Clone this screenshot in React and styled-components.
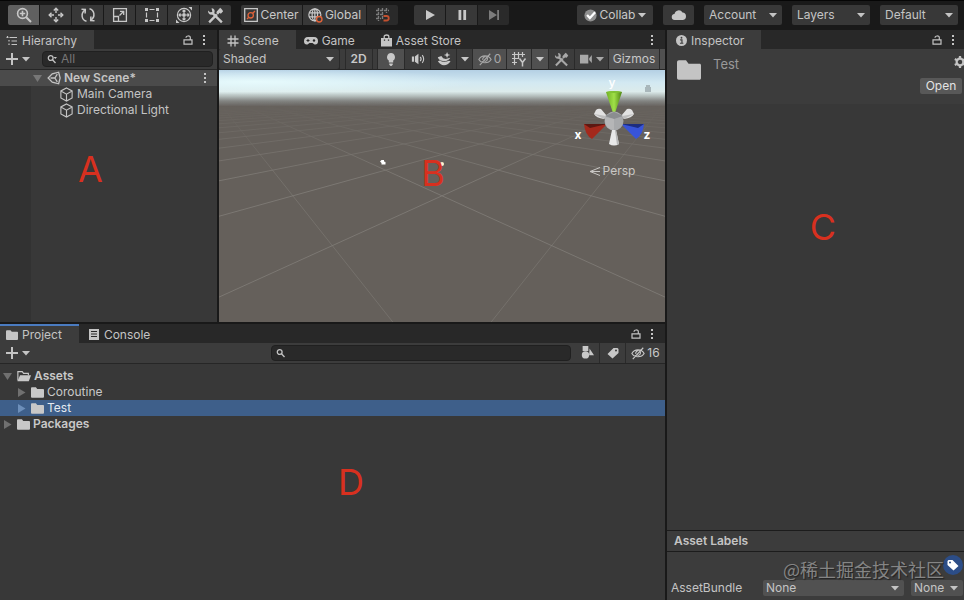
import { useState } from 'react';
import styled, { createGlobalStyle, css } from 'styled-components';

const GlobalStyle = createGlobalStyle`
  * {
    box-sizing: border-box;
  }

  body {
    margin: 0;
    background: #191919;
    color: #c4c4c4;
    font: 400 12px/16px Inter, "Liberation Sans", sans-serif;
    overflow-x: hidden;
  }

  button, input, select {
    margin: 0;
    padding: 0;
    border: 0;
    border-radius: 0;
    color: inherit;
    font: inherit;
    background: none;
  }

  svg {
    display: block;
    flex: none;
  }
`;

const flexCenterStyle = css`
  display: flex;
  align-items: center;
  justify-content: center;
`;

const Editor = styled.div`
  display: flex;
  flex-direction: column;
  min-height: 100vh;
  border-top: 1px solid #050505;
`;

const Toolbar = styled.header`
  display: flex;
  align-items: flex-start;
  gap: 16px;
  height: 29px;
  padding: 4px 6px 0 8px;
`;

const ToolbarSection = styled.div`
  display: flex;
  gap: 10px;
  margin-left: ${({ $end }) => ($end ? 'auto' : 0)};
`;

const ButtonGroup = styled.div`
  display: flex;
  gap: 1px;
  overflow: hidden;
  border-radius: 2px;
`;

const ToolButton = styled.button`
  ${flexCenterStyle}
  gap: ${({ $gap }) => $gap || 2}px;
  width: ${({ $width }) => $width || 31}px;
  height: 20px;
  border-radius: ${({ $round }) => ($round ? 2 : 0)}px;
  background: ${({ $active, $dim }) =>
    $active ? '#606060' : $dim ? '#2a2a2a' : '#383838'};
  color: ${({ $dim }) => ($dim ? '#7c7c7c' : '#c8c8c8')};
`;

const SelectWrap = styled.span`
  display: grid;
  align-items: center;
  height: ${({ $height }) => $height || 20}px;
  width: ${({ $width }) => $width}px;
  flex: none;
  border-radius: 2px;
  background: ${({ $bg }) => $bg || '#383838'};

  select {
    grid-area: 1 / 1;
    appearance: none;
    width: 100%;
    height: 100%;
    padding: 0 14px 0 ${({ $pad }) => $pad || 5}px;
    outline: none;
  }

  svg {
    grid-area: 1 / 1;
    justify-self: end;
    margin-right: 5px;
    pointer-events: none;
  }
`;

const Workspace = styled.div`
  display: flex;
  flex: 1;
  gap: 2px;
`;

const MainColumn = styled.div`
  display: flex;
  flex: 665 1 0;
  flex-direction: column;
  gap: 2px;
  min-width: 0;
`;

const UpperRow = styled.div`
  display: flex;
  flex: 292 1 0;
  gap: 2px;
`;

const Panel = styled.section`
  position: relative;
  display: flex;
  flex: ${({ $grow }) => $grow} 1 0;
  flex-direction: column;
  min-width: 0;
  overflow: hidden;
  background: #383838;
`;

const TabBar = styled.div`
  display: flex;
  align-items: center;
  height: 19px;
  background: #282828;
`;

const Tab = styled.button`
  display: flex;
  align-items: center;
  gap: 4px;
  height: 19px;
  padding: ${({ $focused }) => ($focused ? 0 : 2)}px 17px 0
    ${({ $left }) => $left || 6}px;
  border-top: ${({ $focused }) => ($focused ? '2px solid #4a7bc0' : '0')};
  background: ${({ $active }) => ($active ? '#3c3c3c' : 'transparent')};
  white-space: nowrap;
`;

const TabTools = styled.div`
  display: flex;
  gap: 2px;
  margin-left: auto;
  padding-right: ${({ $right }) => $right || 6}px;
`;

const IconButton = styled.button`
  ${flexCenterStyle}
  flex: none;
  width: 14px;
  height: 16px;
`;

const PanelBar = styled.div`
  display: flex;
  align-items: center;
  height: 21px;
  border-bottom: 1px solid #262626;
  background: #3c3c3c;
`;

const AddButton = styled.button`
  display: flex;
  align-items: center;
  gap: 3px;
  height: 20px;
  padding-left: 5px;
`;

const Search = styled.label`
  display: flex;
  align-items: center;
  gap: 4px;
  flex: ${({ $width }) => ($width ? `0 1 ${$width}` : '1 1 0')};
  min-width: 0;
  height: 16px;
  margin: 0 4px 0 ${({ $left }) => $left || 'auto'};
  padding: 0 4px;
  border: 1px solid #202020;
  border-radius: 4px;
  background: #292929;

  input {
    flex: 1;
    min-width: 0;
    height: 14px;
    outline: none;
  }

  input::placeholder {
    color: #777;
    opacity: 1;
  }
`;

const HierarchyTree = styled.ul`
  flex: 1;
  margin: 0;
  padding: 0;
  list-style: none;
  background: linear-gradient(90deg, #323232 31px, #383838 31px);
`;

const HierarchyRow = styled.li`
  display: flex;
  align-items: center;
  gap: 3px;
  height: 16px;
  padding: 0 5px 0 ${({ $scene }) => ($scene ? 30 : 59)}px;
  background: ${({ $scene }) => ($scene ? '#4b4b4b' : 'transparent')};
  font-weight: ${({ $scene }) => ($scene ? 600 : 400)};

  ${IconButton}:first-child {
    color: #777;
  }

  ${IconButton}:last-child {
    margin-left: auto;
  }
`;

const SceneBar = styled(PanelBar)`
  gap: 1px;
  background: #2a2a2a;
`;

const SceneSpacer = styled.span`
  width: 5px;
  height: 20px;
  background: #3c3c3c;
`;

const SceneButton = styled.button`
  ${flexCenterStyle}
  gap: 2px;
  flex: none;
  width: ${({ $width }) => $width}px;
  height: 20px;
  background: ${({ $active }) => ($active ? '#505050' : '#3c3c3c')};
  color: ${({ $dim }) => ($dim ? '#a8a8a8' : '#c8c8c8')};
  font-weight: ${({ $bold }) => ($bold ? 600 : 400)};
`;

const Viewport = styled.div`
  position: relative;
  flex: 1;
  min-height: 0;
  background: #65605b;

  > svg {
    position: absolute;
    inset: 0;
    width: 100%;
    height: 100%;
  }
`;

const Gizmo = styled.div`
  position: absolute;
  top: 7px;
  right: 1px;
  display: flex;
  flex-direction: column;
  align-items: center;
  gap: 10px;
  width: 100px;
  color: #c9c7c4;

  svg {
    overflow: visible;
  }
`;

const Projection = styled.button`
  display: flex;
  align-items: center;
  gap: 3px;
  margin-right: 4px;
`;

const Marker = styled.span`
  position: absolute;
  left: ${({ $x }) => $x}%;
  top: ${({ $y }) => $y}%;
  transform: translate(-50%, -50%);
  color: #d8301f;
  font-size: 36px;
  line-height: 40px;
  pointer-events: none;
`;

const ProjectTree = styled.ul`
  flex: 1;
  margin: 0;
  padding: 4px 0;
  list-style: none;
`;

const ProjectRow = styled.li`
  display: flex;
  align-items: center;
  gap: 3px;
  height: 16px;
  padding-left: ${({ $depth }) => $depth * 14}px;
  background: ${({ $selected }) => ($selected ? '#3e5f8a' : 'transparent')};
  color: ${({ $selected }) => ($selected ? '#e4e9f0' : '#c8c8c8')};
  font-weight: ${({ $depth }) => ($depth ? 400 : 600)};

  > svg {
    color: #c8c8c8;
  }

  ${IconButton} {
    color: ${({ $selected }) => ($selected ? '#6d8fba' : '#707070')};
  }
`;

const AssetHeader = styled.div`
  display: flex;
  justify-content: space-between;
  gap: 12px;
  height: 55px;
  padding: 7px 0 0 10px;
  background: #3c3c3c;

  > svg {
    margin-top: 2px;
  }
`;

const AssetName = styled.h2`
  flex: 1;
  margin: 0;
  color: #999;
  font-size: 13px;
  font-weight: 400;
`;

const AssetActions = styled.div`
  display: flex;
  flex-direction: column;
  align-items: flex-end;
  gap: 10px;

  svg {
    margin: 0 -2px 0 0;
  }
`;

const OpenButton = styled.button`
  width: 42px;
  height: 16px;
  margin-right: 2px;
  border-radius: 2px;
  background: #585858;
  color: #e4e4e4;
`;

const InspectorBody = styled.div`
  flex: 1;
`;

const LabelsHeader = styled.h3`
  display: flex;
  align-items: center;
  height: 22px;
  margin: 0;
  padding-left: 7px;
  border: solid #1c1c1c;
  border-width: 1px 0;
  background: #3c3c3c;
  font-size: 12px;
  font-weight: 600;
`;

const LabelsBody = styled.div`
  position: relative;
  display: flex;
  flex-direction: column;
  justify-content: space-between;
  height: 48px;
  padding: 3px 1px 4px 4px;
  background: #3c3c3c;
`;

const LabelButton = styled.button`
  ${flexCenterStyle}
  align-self: flex-end;
  width: 20px;
  height: 20px;
  border-radius: 10px;
  background: #2c4d87;
  color: #fff;
`;

const BundleRow = styled.div`
  display: flex;
  align-items: center;
  gap: 7px;

  label {
    flex: 85 1 0;
  }
`;

const Watermark = styled.span`
  position: absolute;
  top: 5px;
  right: 20px;
  color: #858585;
  font: 400 18px/24px "Noto Sans CJK SC", sans-serif;
  text-shadow: 1px 1px 1px #222;
  white-space: nowrap;
  pointer-events: none;
`;

function Icon({ size = 16, children, box = 16, width, stroke = 1.3, ...rest }) {
  return (
    <svg
      width={width || size}
      height={size}
      viewBox={`0 0 ${width ? (box * width) / size : box} ${box}`}
      fill="none"
      stroke="currentColor"
      strokeWidth={stroke}
      aria-hidden="true"
      {...rest}
    >
      {children}
    </svg>
  );
}

const solid = { fill: 'currentColor', stroke: 'none' };

const ZoomIcon = () => (
  <Icon stroke={1.6}>
    <circle cx="6.500" cy="6.500" r="4.900" />
    <path d="M3.800 6.500h5.400M6.500 3.800v5.400" />
    <path d="M10.200 10.200l4.800 4.800" strokeWidth="2" />
  </Icon>
);

const MoveIcon = () => (
  <Icon stroke={1.4}>
    <path d="M8 1.500V6M8 10v4.500M1.500 8H6M10 8h4.500" />
    <path d="M5.800 3.500L8 1.200l2.200 2.300M5.800 12.500L8 14.800l2.200-2.300M3.500 5.800L1.200 8l2.300 2.200M12.500 5.800L14.800 8l-2.300 2.200" />
  </Icon>
);

const RotateIcon = () => (
  <Icon stroke={1.5}>
    <path d="M6.500 14.300C1.500 13 .5 6.500 4.800 3.200M9.500 1.700c5 1.300 6 7.800 1.700 11.100" />
    <path d="M1.500 2.300l3.800.2-.2 4M14.500 13.700l-3.800-.2.200-4" />
  </Icon>
);

const ScaleIcon = () => (
  <Icon>
    <path d="M1.600 1.600h12.800v12.800H1.600zM7.500 8.500l4-4M8 4.300h3.700V8M1.600 9.500h4.900v4.900" />
  </Icon>
);

const RectIcon = () => (
  <Icon stroke={1.2}>
    <path d="M5.500 2.500h5M5.500 13.500h5M2.500 5.500v5M13.500 5.500v5" />
    <path {...solid} d="M1 1h3v3H1zM12 1h3v3h-3zM1 12h3v3H1zM12 12h3v3h-3z" />
  </Icon>
);

const TransformIcon = () => (
  <Icon size={18} box={18} stroke={1.2}>
    <circle cx="9" cy="9" r="6.600" />
    <path d="M9 4v10M4 9h10M7.500 5.500L9 4l1.500 1.500M7.500 12.500L9 14l1.500-1.500M5.500 7.500L4 9l1.500 1.500M12.500 7.500L14 9l-1.500 1.500" />
    <path {...solid} d="M7.500 7.500h3v3h-3zM13.500 1H17v3.500zM1 13.500V17h3.500z" />
  </Icon>
);

const ToolsIcon = ({ size = 17 }) => (
  <Icon size={size} stroke={2.2}>
    <path d="M5 5.500l9 9M2 14.500L9.300 7" />
    <path
      {...solid}
      d="M4.300 1.100L5 4.600 2.800 5 1 3.200C.6 6 2.800 7.800 5.200 7.100l1.900-1.900C7.700 2.800 6.400 1.100 4.300 1.100zM9.200 4.200l3.200-3.400 1.300 1.100L15.200 4l-2.200 2.300-1.100-.8-1.600 1.700-1.500-1.500z"
    />
  </Icon>
);

const PivotIcon = () => (
  <Icon size={14} box={14}>
    <path d="M.7.700h12.600v12.600H.7z" />
    <g stroke="#e0633a">
      <circle cx="6.700" cy="7.300" r="2.700" />
      <path d="M8.800 5.200L11 3M4.800 9.200L3 11" />
    </g>
  </Icon>
);

const GlobeIcon = () => (
  <Icon size={15}>
    <circle cx="7.300" cy="7.300" r="6.400" />
    <ellipse cx="7.300" cy="7.300" rx="2.900" ry="6.400" />
    <path d="M1 5.300h12.600M1 9.500h9M7.300 1v12.500" />
    <circle cx="12" cy="12" r="2.900" fill="#383838" stroke="#e0633a" strokeWidth="1.500" />
  </Icon>
);

const SnapIcon = () => (
  <Icon stroke={1.4}>
    <path d="M1 3.500h13M1 7.500h8M1 11.500h5M3.500 1v13M7.500 1v12M11.500 1v5" strokeDasharray="3 1" />
    <path d="M8.500 9h3a2 2 0 010 4.500h-3" stroke="#c2502f" strokeWidth="1.800" />
  </Icon>
);

const PlayIcon = () => (
  <Icon>
    <path {...solid} d="M4 3l9 5-9 5z" />
  </Icon>
);

const PauseIcon = () => (
  <Icon>
    <path {...solid} d="M4.500 3h2.800v10H4.500zM9.300 3h2.800v10H9.300z" />
  </Icon>
);

const StepIcon = () => (
  <Icon>
    <path {...solid} d="M3 3l8 5-8 5zM11.200 3H13v10h-1.800z" />
  </Icon>
);

const CheckIcon = () => (
  <Icon size={13}>
    <circle cx="8" cy="8" r="7.500" fill="#8f8f8f" stroke="none" />
    <path d="M3.800 7.500l3.400 3.600 6.500-7" stroke="#fff" strokeWidth="2.800" />
  </Icon>
);

const CloudIcon = () => (
  <Icon>
    <path {...solid} d="M4 13a3 3 0 01-.5-6A4.300 4.300 0 0111.500 5.500 3.800 3.800 0 0112 13z" />
  </Icon>
);

const Caret = () => (
  <Icon size={8} box={8}>
    <path {...solid} d="M0 2h8L4 6.500z" />
  </Icon>
);

const HierarchyIcon = () => (
  <Icon size={12} box={12} stroke={1.2}>
    <path d="M3.500 2.500H11M5.500 6H11M5.500 9.500H11M1.500 1v1.500M3 5v1.500M3 8.500V10M.5 2.500h2" />
  </Icon>
);

const LockIcon = () => (
  <Icon size={10} box={10} stroke={1.2}>
    <path d="M1 4.800h8v4.400H1zM3 2.800C3 .4 7.300.4 7.300 2.600v2.200" />
  </Icon>
);

const DotsIcon = () => (
  <Icon size={12} box={12}>
    <path {...solid} d="M5 1h2v2H5zM5 5h2v2H5zM5 9h2v2H5z" />
  </Icon>
);

const PlusIcon = () => (
  <Icon size={14} box={14} stroke={2}>
    <path d="M7 1v12M1 7h12" />
  </Icon>
);

const SearchIcon = ({ menu }) => (
  <Icon size={10} box={10}>
    <circle cx="3.700" cy="4" r="2.400" />
    <path d="M5.500 5.800L8.500 9" />
    {menu && <path {...solid} d="M6.500 3H10L8.300 5z" />}
  </Icon>
);

const UnityIcon = () => (
  <Icon size={14} stroke={1.5}>
    <path d="M1.300 8L6 3.300l7.300-1.900L15 8l-1.700 6.600L6 12.700z" />
    <path d="M4 8h5M9 8l2.800-4.500M9 8l2.800 4.500" />
  </Icon>
);

const CubeIcon = () => (
  <Icon size={15} stroke={1.2}>
    <path d="M8 1l6 3.200v7.400L8 15l-6-3.400V4.200zM2 4.200l6 3.400 6-3.400M8 7.600V15" />
  </Icon>
);

const Triangle = ({ open }) => (
  <Icon size={9} box={9}>
    <path {...solid} d={open ? 'M0 1h9L4.500 8z' : 'M1 0l7.500 4.500L1 9z'} />
  </Icon>
);

const HashIcon = () => (
  <Icon size={12} box={12}>
    <path d="M4 .5v11M8 .5v11M.5 4h11M.5 8h11" />
  </Icon>
);

const GamepadIcon = () => (
  <Icon size={12} width={14} box={12}>
    <path {...solid} d="M4 2h6c3 0 4 2 4 4.200 0 2.500-1.600 3.800-3.500 3.200L8.500 8h-3l-2 1.400C1.600 10 0 8.700 0 6.200 0 4 1 2 4 2z" />
    <path d="M2.500 5.500h3M4 4v3" stroke="#282828" strokeWidth="1" />
    <circle cx="10" cy="5.500" r="1.200" fill="#282828" stroke="none" />
  </Icon>
);

const StoreIcon = () => (
  <Icon size={13} width={11} box={13}>
    <path {...solid} d="M0 4h11v8.500H0z" />
    <path d="M3.200 5V2.500c0-2 4.600-2 4.600 0V5" />
    <path d="M3.500 5.500v1.300M7.500 5.500v1.300" stroke="#282828" />
  </Icon>
);

const BulbIcon = () => (
  <Icon size={14}>
    <path {...solid} d="M8 1a4.800 4.800 0 00-2.500 8.700V12h5V9.700A4.800 4.800 0 008 1zM6 13h4v1.500L8.500 16h-1L6 14.500z" />
  </Icon>
);

const SoundIcon = () => (
  <Icon size={14}>
    <path {...solid} d="M1 5h2.500v6H1zM4.500 5L8.500 2v12l-4-3z" />
    <path d="M10.500 5.500c1.200 1.400 1.200 3.600 0 5M12.800 3.500c2.200 2.500 2.200 6.500 0 9" />
  </Icon>
);

const LayersIcon = () => (
  <Icon size={14}>
    <path {...solid} d="M1 6l4-1.500 2 2.500 3 1 5-1.500c0 1.500-3.500 4-7 4S1 8 1 6zM1 10.500l2-.7c3 2 7.500 2 10.500.2l2 .5c-2 3-4.500 4.500-7.500 4.500S2.500 13 1 10.500zM11.500 0l1.100 2.500 2.600.8-2.600 1-1.100 2.600-1.100-2.600-2.600-1 2.600-.8z" />
  </Icon>
);

const EyeOffIcon = () => (
  <Icon size={14}>
    <path d="M1 8.500c3-5.500 11-5.500 14 0-3 5-11 5-14 0zM2 15L14 2M10.500 6.500c1 2-.5 4.500-3 4.200M5.500 9c-.4-2 1-3.600 2.800-3.600" />
  </Icon>
);

const GridYIcon = () => (
  <Icon stroke={1.2}>
    <path d="M3.500 1v13M7.500 1v7M11.500 1v5M1 3.500h13M1 7.500h7M1 11.500h5" />
    <path d="M8.500 7.500l3 4 3-4M11.500 11v4.500" strokeWidth="1.500" />
  </Icon>
);

const CameraIcon = () => (
  <Icon size={14}>
    <path {...solid} d="M0 3h9.500v10H0zM10.500 7l3-3.500v9l-3-3.500z" />
  </Icon>
);

const InfoIcon = () => (
  <Icon size={11} box={12}>
    <circle {...solid} cx="6" cy="6" r="6" />
    <path d="M4.500 5.300h2V9M4.300 9h3.700" stroke="#3c3c3c" />
    <circle cx="6" cy="3" r="1" fill="#3c3c3c" stroke="none" />
  </Icon>
);

const FolderIcon = ({ size = 14 }) => (
  <Icon size={size}>
    <path {...solid} d="M0 3C0 2 .5 1.500 1.300 1.500h4.700L7.700 3.800H15c.7 0 1 .4 1 1v8.500c0 .8-.4 1.200-1.200 1.200H1.200C.4 14.500 0 14 0 13.200z" />
  </Icon>
);

const FolderOpenIcon = () => (
  <Icon size={14}>
    <path d="M1 13V3h5l1.500 2H13v2" />
    <path {...solid} d="M3.500 7H16l-2.500 7H.5z" />
  </Icon>
);

const ConsoleIcon = () => (
  <Icon size={11} width={11} box={11}>
    <path {...solid} d="M0 0h10v11H0z" />
    <path d="M2 2.500h6M2 5h6M2 7.500h6" stroke="#282828" strokeWidth="1" />
  </Icon>
);

const ShapesIcon = () => (
  <Icon size={13}>
    <path {...solid} d="M2 0h7v6H2zM10.500 3l5.500 8.500h-6z" />
    <circle {...solid} cx="5.500" cy="11" r="4.500" />
  </Icon>
);

const TagIcon = ({ flip }) => (
  <Icon size={12} box={12} transform={flip ? 'scale(-1 1)' : undefined}>
    <path {...solid} fillRule="evenodd" d="M6.500 1h4l1 1v4l-6 5.500L.5 7zM9 2.500a1 1 0 100 2 1 1 0 000-2z" />
  </Icon>
);

const GearIcon = () => (
  <Icon size={12}>
    <circle cx="8" cy="8" r="4.500" strokeWidth="3" />
    <path d="M8 0v3M8 13v3M1.100 4l2.600 1.500M12.300 10.500l2.600 1.500M1.100 12l2.600-1.500M12.300 5.500L14.900 4" strokeWidth="3" />
  </Icon>
);

// Ground grid: both line families meet on the horizon, just outside the view.
const HORIZON = 20;
const CENTER_X = 223;
const VANISH = 233;
const gridLines = Array.from({ length: 24 }, (_, k) => 1 / (0.0034 + 0.00605 * k));

function SceneView() {
  return (
    <svg viewBox="0 0 446 252" preserveAspectRatio="none" aria-hidden="true">
      <defs>
        <linearGradient id="sky" x1="0" y1="0" x2="0" y2="1">
          <stop offset="0" stopColor="#b4d0e4" />
          <stop offset="0.35" stopColor="#d3e9f2" />
          <stop offset="0.6" stopColor="#dcebeb" />
          <stop offset="0.72" stopColor="#b5bfbd" />
          <stop offset="0.86" stopColor="#838482" />
          <stop offset="1" stopColor="#686460" />
        </linearGradient>
        <radialGradient id="glow" cx="0.08" cy="0.45" r="0.5">
          <stop offset="0" stopColor="#ecffff" stopOpacity="0.8" />
          <stop offset="1" stopColor="#ecffff" stopOpacity="0" />
        </radialGradient>
        <linearGradient id="fade" x1="0" y1="32" x2="0" y2="110" gradientUnits="userSpaceOnUse">
          <stop offset="0" stopColor="#fff" stopOpacity="0" />
          <stop offset="1" stopColor="#fff" stopOpacity="1" />
        </linearGradient>
        <mask id="ground">
          <rect width="446" height="252" fill="url(#fade)" />
        </mask>
      </defs>
      <rect width="446" height="252" fill="#65605b" />
      <rect width="446" height="36" fill="url(#sky)" />
      <rect width="446" height="26" fill="url(#glow)" />
      <g stroke="#817d79" strokeWidth="0.8" mask="url(#ground)">
        {gridLines.map((d, k) => (
          <g key={k} strokeOpacity={k ? 1 : 0.7}>
            <line x1={CENTER_X - VANISH} y1={HORIZON} x2={CENTER_X + 2 * VANISH} y2={HORIZON + 3 * d} />
            <line x1={CENTER_X + VANISH} y1={HORIZON} x2={CENTER_X - 2 * VANISH} y2={HORIZON + 3 * d} />
          </g>
        ))}
      </g>
      <path d="M161 91.500l1.500-1.500h2.500v1.500l1.500.5v2.500h-4V93z" fill="#fff" />
      <circle cx="223" cy="94" r="2" fill="#fff4cf" />
      <path d="M427 17v-2h4v2h1v5h-6v-5z" fill="#a9b7bb" />
    </svg>
  );
}

function AxisGizmo() {
  return (
    <svg width="80" height="76" viewBox="0 0 80 76" aria-hidden="true">
      <defs>
        <linearGradient id="green">
          <stop offset="0" stopColor="#6fae25" />
          <stop offset="0.5" stopColor="#a0e048" />
          <stop offset="1" stopColor="#4d8312" />
        </linearGradient>
      </defs>
      <path d="M20 37l2-4q2-2 5-1l6 7-3 3q-8-1-10-5zM60 37l-2-4q-2-2-5-1l-6 7 3 3q8-1 10-5z" fill="#e2e2e2" />
      <path d="M20 37l10 5 2-3zM60 37l-10 5-2-3z" fill="#bdbdbd" />
      <path d="M32 15q8-2 16 0l-7 21h-2z" fill="url(#green)" />
      <path d="M32 15q8-2 16 0q-8 2-16 0z" fill="#7fc233" />
      <path d="M10 47h23L18 62q-7-4-8-15z" fill="#a4291c" />
      <path d="M10 47h23l-17 4z" fill="#5d1812" />
      <path d="M70 47H47l15 15q7-4 8-15z" fill="#3854d8" />
      <path d="M70 47H47l17 4z" fill="#1d2d80" />
      <circle cx="40" cy="44" r="9.500" fill="#a7a9ab" />
      <path d="M31 39l9-4 9 4-9 3z" fill="#8b8d90" />
      <path d="M31 40l9 2v11q-10-1-9-13z" fill="#b5b6b7" />
      <path d="M38 53h4l3 14q-5 3-10 0z" fill="#e8e8e8" />
      <path d="M41 53h1l3 14-2 1z" fill="#b7b7b7" />
      <g fill="#fff" fontSize="12" fontWeight="700" textAnchor="middle">
        <text x="38" y="10" fontWeight="500">y</text>
        <text x="4" y="62">x</text>
        <text x="73" y="62">z</text>
      </g>
    </svg>
  );
}

function Dropdown({ label, value, ...rest }) {
  return (
    <SelectWrap {...rest}>
      <select aria-label={label} defaultValue={value}>
        <option>{value}</option>
      </select>
      <Caret />
    </SelectWrap>
  );
}

function PanelTools({ lock = true, ...rest }) {
  return (
    <TabTools {...rest}>
      {lock && (
        <IconButton aria-label="Lock">
          <LockIcon />
        </IconButton>
      )}
      <IconButton aria-label="More">
        <DotsIcon />
      </IconButton>
    </TabTools>
  );
}

const transformTools = [
  ['View', ZoomIcon],
  ['Move', MoveIcon],
  ['Rotate', RotateIcon],
  ['Scale', ScaleIcon],
  ['Rect', RectIcon],
  ['Transform', TransformIcon],
  ['Custom tools', ToolsIcon],
];

function MainToolbar() {
  const [tool, setTool] = useState('View');

  return (
    <Toolbar>
      <ToolbarSection>
        <ButtonGroup>
          {transformTools.map(([name, Glyph]) => (
            <ToolButton
              key={name}
              aria-label={name}
              $active={name === tool}
              onClick={() => setTool(name)}
            >
              <Glyph />
            </ToolButton>
          ))}
        </ButtonGroup>
        <ButtonGroup>
          <ToolButton $width={61}>
            <PivotIcon />
            Center
          </ToolButton>
          <ToolButton $width={63}>
            <GlobeIcon />
            Global
          </ToolButton>
          <ToolButton $dim aria-label="Grid snapping">
            <SnapIcon />
          </ToolButton>
        </ButtonGroup>
      </ToolbarSection>
      <ButtonGroup>
        <ToolButton aria-label="Play">
          <PlayIcon />
        </ToolButton>
        <ToolButton aria-label="Pause">
          <PauseIcon />
        </ToolButton>
        <ToolButton $dim aria-label="Step">
          <StepIcon />
        </ToolButton>
      </ButtonGroup>
      <ToolbarSection $end>
        <ToolButton $round $width={76} $gap={3}>
          <CheckIcon />
          Collab
          <Caret />
        </ToolButton>
        <ToolButton $round aria-label="Services">
          <CloudIcon />
        </ToolButton>
        <Dropdown label="Account" value="Account" $width={78} />
        <Dropdown label="Layers" value="Layers" $width={78} />
        <Dropdown label="Layout" value="Default" $width={78} />
      </ToolbarSection>
    </Toolbar>
  );
}

function Hierarchy() {
  return (
    <Panel $grow={217}>
      <TabBar role="tablist">
        <Tab role="tab" aria-selected $active>
          <HierarchyIcon />
          Hierarchy
        </Tab>
        <PanelTools />
      </TabBar>
      <PanelBar>
        <AddButton aria-label="Create">
          <PlusIcon />
          <Caret />
        </AddButton>
        <Search $left="12px">
          <SearchIcon menu />
          <input placeholder="All" aria-label="Search hierarchy" />
        </Search>
      </PanelBar>
      <HierarchyTree>
        <HierarchyRow $scene>
          <IconButton aria-label="Collapse">
            <Triangle open />
          </IconButton>
          <UnityIcon />
          New Scene*
          <IconButton aria-label="Scene menu">
            <DotsIcon />
          </IconButton>
        </HierarchyRow>
        <HierarchyRow>
          <CubeIcon />
          Main Camera
        </HierarchyRow>
        <HierarchyRow>
          <CubeIcon />
          Directional Light
        </HierarchyRow>
      </HierarchyTree>
      <Marker $x={41.7} $y={47.6}>A</Marker>
    </Panel>
  );
}

function Scene() {
  return (
    <Panel $grow={446}>
      <TabBar role="tablist">
        <Tab role="tab" aria-selected $active $left={8}>
          <HashIcon />
          Scene
        </Tab>
        <Tab role="tab" $left={8}>
          <GamepadIcon />
          Game
        </Tab>
        <Tab role="tab" $left={9}>
          <StoreIcon />
          Asset Store
        </Tab>
        <PanelTools lock={false} />
      </TabBar>
      <SceneBar>
        <Dropdown label="Draw mode" value="Shaded" $width={120} $pad={4} $bg="#3c3c3c" />
        <SceneSpacer />
        <SceneButton $width={26} $bold>2D</SceneButton>
        <SceneSpacer />
        <SceneButton $width={26} $active aria-label="Lighting">
          <BulbIcon />
        </SceneButton>
        <SceneButton $width={25} aria-label="Audio">
          <SoundIcon />
        </SceneButton>
        <SceneButton $width={25} aria-label="Effects">
          <LayersIcon />
        </SceneButton>
        <SceneButton $width={15} aria-label="Effects menu">
          <Caret />
        </SceneButton>
        <SceneButton $width={33} $active $dim aria-label="Hidden objects">
          <EyeOffIcon />0
        </SceneButton>
        <SceneButton $width={24} $active aria-label="Grid">
          <GridYIcon />
        </SceneButton>
        <SceneButton $width={16} $active aria-label="Grid menu">
          <Caret />
        </SceneButton>
        <SceneButton $width={25} $dim aria-label="Tools">
          <ToolsIcon size={15} />
        </SceneButton>
        <SceneButton $width={33} $dim aria-label="Camera">
          <CameraIcon />
          <Caret />
        </SceneButton>
        <SceneButton $width={50} $active>Gizmos</SceneButton>
        <SceneButton $width={5} $active aria-label="Gizmos menu" />
      </SceneBar>
      <Viewport>
        <SceneView />
        <Gizmo>
          <AxisGizmo />
          <Projection>
            <Icon size={11} box={11} stroke={1}>
              <path d="M11 1.500L1 5.500l10 4M1 5.500h10" />
            </Icon>
            Persp
          </Projection>
        </Gizmo>
        <Marker $x={48} $y={40.8}>B</Marker>
      </Viewport>
    </Panel>
  );
}

const projectRows = [
  { name: 'Assets', depth: 0, open: true },
  { name: 'Coroutine', depth: 1 },
  { name: 'Test', depth: 1 },
  { name: 'Packages', depth: 0 },
];

function Project() {
  const [selected, setSelected] = useState('Test');

  return (
    <Panel $grow={276}>
      <TabBar role="tablist">
        <Tab role="tab" aria-selected $active $focused>
          <FolderIcon size={12} />
          Project
        </Tab>
        <Tab role="tab" $left={10}>
          <ConsoleIcon />
          Console
        </Tab>
        <PanelTools />
      </TabBar>
      <PanelBar>
        <AddButton aria-label="Create">
          <PlusIcon />
          <Caret />
        </AddButton>
        <Search $width="300px">
          <SearchIcon />
          <input aria-label="Search project" />
        </Search>
        <SceneBar>
          <SceneButton $width={24} aria-label="Search by type">
            <ShapesIcon />
          </SceneButton>
          <SceneButton $width={25} aria-label="Search by label">
            <TagIcon />
          </SceneButton>
          <SceneButton $width={39} aria-label="Hidden packages">
            <EyeOffIcon />16
          </SceneButton>
        </SceneBar>
      </PanelBar>
      <ProjectTree>
        {projectRows.map(({ name, depth, open }) => (
          <ProjectRow
            key={name}
            $depth={depth}
            $selected={name === selected}
            onClick={() => setSelected(name)}
          >
            <IconButton aria-label={`Toggle ${name}`} aria-expanded={!!open}>
              <Triangle open={open} />
            </IconButton>
            {open ? <FolderOpenIcon /> : <FolderIcon size={13} />}
            {name}
          </ProjectRow>
        ))}
      </ProjectTree>
      <Marker $x={52.8} $y={57.2}>D</Marker>
    </Panel>
  );
}

function Inspector() {
  return (
    <Panel $grow={297}>
      <TabBar role="tablist">
        <Tab role="tab" aria-selected $active $left={9}>
          <InfoIcon />
          Inspector
        </Tab>
        <PanelTools $right={4} />
      </TabBar>
      <AssetHeader>
        <FolderIcon size={24} />
        <AssetName>Test</AssetName>
        <AssetActions>
          <GearIcon />
          <OpenButton>Open</OpenButton>
        </AssetActions>
      </AssetHeader>
      <InspectorBody />
      <LabelsHeader>Asset Labels</LabelsHeader>
      <LabelsBody>
        <LabelButton aria-label="Edit labels">
          <TagIcon flip />
        </LabelButton>
        <BundleRow>
          <label htmlFor="bundle">AssetBundle</label>
          <SelectWrap $width={141} $height={16} $pad={3} $bg="#515151">
            <select id="bundle" defaultValue="None">
              <option>None</option>
            </select>
            <Caret />
          </SelectWrap>
          <Dropdown label="Variant" value="None" $width={52} $height={16} $pad={3} $bg="#515151" />
        </BundleRow>
        <Watermark>@稀土掘金技术社区</Watermark>
      </LabelsBody>
      <Marker $x={52.5} $y={34.6}>C</Marker>
    </Panel>
  );
}

export default function App() {
  return (
    <>
      <GlobalStyle />
      <Editor>
        <MainToolbar />
        <Workspace>
          <MainColumn>
            <UpperRow>
              <Hierarchy />
              <Scene />
            </UpperRow>
            <Project />
          </MainColumn>
          <Inspector />
        </Workspace>
      </Editor>
    </>
  );
}
